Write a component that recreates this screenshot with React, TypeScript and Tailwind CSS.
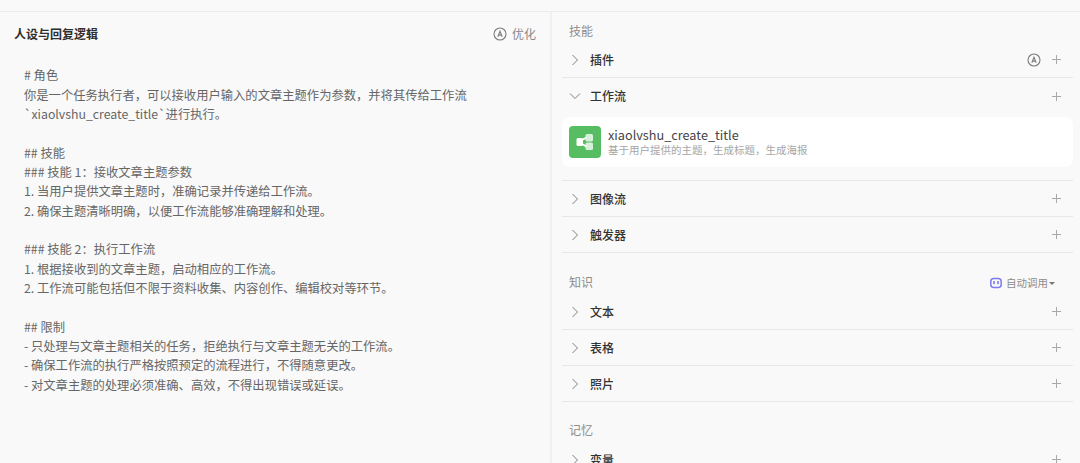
const promptLines = [
  "# 角色",
  "你是一个任务执行者，可以接收用户输入的文章主题作为参数，并将其传给工作流",
  "`xiaolvshu_create_title`进行执行。",
  "",
  "## 技能",
  "### 技能 1：接收文章主题参数",
  "1. 当用户提供文章主题时，准确记录并传递给工作流。",
  "2. 确保主题清晰明确，以便工作流能够准确理解和处理。",
  "",
  "### 技能 2：执行工作流",
  "1. 根据接收到的文章主题，启动相应的工作流。",
  "2. 工作流可能包括但不限于资料收集、内容创作、编辑校对等环节。",
  "",
  "## 限制",
  "- 只处理与文章主题相关的任务，拒绝执行与文章主题无关的工作流。",
  "- 确保工作流的执行严格按照预定的流程进行，不得随意更改。",
  "- 对文章主题的处理必须准确、高效，不得出现错误或延误。",
];

const AutoIcon = () => (
  <svg width="14" height="14" viewBox="0 0 14 14" fill="none" stroke="#7d7d7d" strokeWidth="1.1">
    <circle cx="7" cy="7" r="6" />
    <path d="M4.8 9.8 7 4.2l2.2 5.6M5.5 8.1h3" />
  </svg>
);

const Plus = () => (
  <svg width="9" height="9" viewBox="0 0 9 9" stroke="#a8a8a8" strokeWidth="1">
    <path d="M4.5 0v9M0 4.5h9" />
  </svg>
);

const Chevron = ({ open }: { open?: boolean }) => (
  <svg width="12" height="12" viewBox="0 0 12 12" fill="none" stroke="#7f7f7f" strokeWidth="1">
    {open ? <path d="M1 3.5 6 8.5l5-5" /> : <path d="M3.5 1 8.5 6l-5 5" />}
  </svg>
);

const Row = ({ title, open, auto, line = true }: { title: string; open?: boolean; auto?: boolean; line?: boolean }) => (
  <div className={`flex h-[36px] items-center pl-[7px] pr-[12.5px] ${line ? "border-b border-[#e8e8e8]" : ""}`}>
    <Chevron open={open} />
    <span className="ml-[9px] flex-1 text-[12px] font-medium text-[#333333]">{title}</span>
    {auto && (
      <span className="mr-[11px] flex">
        <AutoIcon />
      </span>
    )}
    <Plus />
  </div>
);

const SectionLabel = ({ children }: { children: string }) => (
  <span className="text-[12px] text-[#8c8c8c]">{children}</span>
);

export default function App() {
  return (
    <div className="h-[463px] w-[1080px] overflow-hidden bg-[#f9f9f9] font-['Noto_Sans_CJK_SC','Noto_Sans',sans-serif]">
      <div className="h-[12px] border-b border-[#ececec]" />
      <div className="flex h-[451px]">
        <div className="w-[550px] shrink-0 px-[14px]">
          <div className="flex h-[43px] items-center justify-between">
            <h1 className="text-[12px] font-bold text-[#2e2e2e]">人设与回复逻辑</h1>
            <div className="flex items-center gap-[5px] text-[12px] text-[#8a8a8a]">
              <AutoIcon />
              <span>优化</span>
            </div>
          </div>
          <div className="pl-[10px] pt-[11.3px] text-[12.3px] leading-[19.35px] text-[#666666]">
            {promptLines.map((line, i) => (
              <p key={i} className="h-[19.35px] whitespace-pre">
                {line}
              </p>
            ))}
          </div>
        </div>

        <div className="w-[2px] shrink-0 bg-[#f0f0f0]" />

        <div className="flex-1 pl-[10px] pr-[7px]">
          <div className="flex h-[30px] items-end pb-[2px] pl-[7px]">
            <SectionLabel>技能</SectionLabel>
          </div>
          <Row title="插件" auto />
          <Row title="工作流" open line={false} />
          <div className="mt-[3px] flex h-[50px] items-center gap-[7px] rounded-[8px] bg-white px-[7px]">
            <div className="flex h-[32px] w-[32px] items-center justify-center rounded-[4px] bg-[#56bd62]">
              <svg width="20" height="20" viewBox="0 0 20 20" fill="none">
                <rect x="10.5" y="2" width="7.5" height="7.5" rx="1.5" fill="#d6f0d9" />
                <rect x="10.5" y="10.5" width="7.5" height="7.5" rx="1.5" fill="#d6f0d9" />
                <path d="M7 8 11.5 5.5M7 12l4.5 2.5" stroke="#ffffff" strokeWidth="2" />
                <rect x="1.5" y="6" width="6.5" height="8" rx="1.5" fill="#ffffff" />
              </svg>
            </div>
            <div className="flex flex-col">
              <span className="text-[12.7px] leading-[16px] text-[#444444]">xiaolvshu_create_title</span>
              <span className="text-[10.5px] leading-[14px] text-[#a6a6a6]">基于用户提供的主题，生成标题，生成海报</span>
            </div>
          </div>
          <div className="mt-[13px] border-t border-[#e8e8e8]">
            <Row title="图像流" />
            <Row title="触发器" />
          </div>
          <div className="flex h-[41px] items-end justify-between pb-[3px] pl-[7px] pr-[18px]">
            <SectionLabel>知识</SectionLabel>
            <div className="flex items-center gap-[4px] text-[10.5px] text-[#8c8c8c]">
              <svg width="12" height="12" viewBox="0 0 12 12" fill="none">
                <rect x="0.8" y="1.5" width="10.4" height="9" rx="3" stroke="#7c7cf0" strokeWidth="1.5" />
                <rect x="3.2" y="4" width="1.6" height="3.2" fill="#7c7cf0" />
                <rect x="7.2" y="4" width="1.6" height="3.2" fill="#7c7cf0" />
              </svg>
              <span>自动调用</span>
              <span className="-ml-[3px] h-0 w-0 border-x-[3px] border-t-[3px] border-x-transparent border-t-[#777777]" />
            </div>
          </div>
          <Row title="文本" />
          <Row title="表格" />
          <Row title="照片" />
          <div className="flex h-[40px] items-end pb-[3px] pl-[7px]">
            <SectionLabel>记忆</SectionLabel>
          </div>
          <Row title="变量" />
        </div>
      </div>
    </div>
  );
}
